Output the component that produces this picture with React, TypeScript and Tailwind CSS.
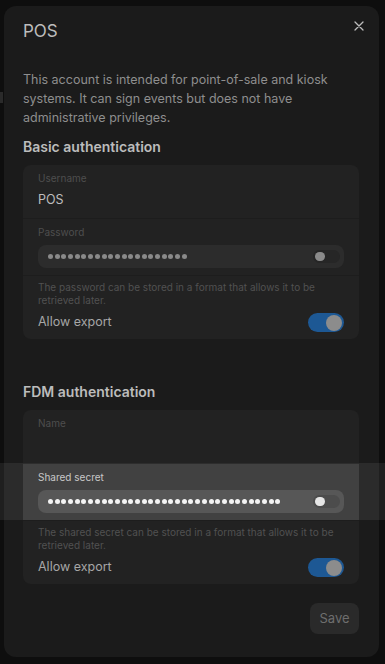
import React from "react";

const font = { fontFamily: "Inter, 'Noto Sans', sans-serif" };

const Dots = ({ count, color }: { count: number; color: string }) => (
  <div className="flex items-center gap-[1.7px]">
    {Array.from({ length: count }).map((_, i) => (
      <span key={i} className={`block w-[5px] h-[5px] rounded-full ${color}`}></span>
    ))}
  </div>
);

const EyeToggle = ({ active }: { active?: boolean }) => (
  <div
    className={`w-[27px] h-[13px] rounded-full flex items-center px-[2px] ${
      active ? "bg-[#3e3e3e]" : "bg-[#262626]"
    }`}
  >
    <span
      className={`block w-[10px] h-[9px] rounded-full ${
        active ? "bg-[#e4e4e4]" : "bg-[#8a8a8a]"
      }`}
    ></span>
  </div>
);

const Switch = () => (
  <div className="w-[36px] h-[19px] rounded-full bg-[#1d5894] flex items-center justify-end px-[2px]">
    <span className="block w-[16px] h-[16px] rounded-full bg-[#8c8c8c]"></span>
  </div>
);

const AuthCard = ({
  firstLabel,
  firstValue,
  secretLabel,
  dots,
  highlight,
  help,
}: {
  firstLabel: string;
  firstValue: string;
  secretLabel: string;
  dots: number;
  highlight?: boolean;
  help: string;
}) => (
  <div className="rounded-[8px] bg-[#222222] flex flex-col">
    <div className="h-[53px] px-[15px] pt-[6px] flex flex-col">
      <span className="text-[10px] leading-[14px] text-[#4e4e4e]">{firstLabel}</span>
      <span className="mt-[6px] text-[12.5px] leading-[18px] text-[#bdbdbd]">{firstValue}</span>
    </div>
    <div
      className={`h-[57px] px-[15px] pt-[6px] flex flex-col border-t border-[#1d1d1d] ${
        highlight ? "bg-[#333333]" : ""
      }`}
    >
      <span
        className={`text-[10px] leading-[14px] ${highlight ? "text-[#c4c4c4]" : "text-[#4e4e4e]"}`}
      >
        {secretLabel}
      </span>
      <div
        className={`mt-[6px] h-[23px] rounded-[8px] flex items-center justify-between pl-[10px] pr-[4px] ${
          highlight ? "bg-[#4a4a4a]" : "bg-[#2c2c2c]"
        }`}
      >
        <Dots count={dots} color={highlight ? "bg-[#f2f2f2]" : "bg-[#8a8a8a]"} />
        <EyeToggle active={highlight} />
      </div>
    </div>
    <div className="px-[15px] pt-[5px] pb-[7px] flex flex-col border-t border-[#1d1d1d]">
      <p className="text-[10px] leading-[13px] text-[#515151] pr-[10px]">{help}</p>
      <div className="mt-[6px] h-[19px] flex items-center justify-between">
        <span className="text-[12.5px] text-[#a6a6a6]">Allow export</span>
        <Switch />
      </div>
    </div>
  </div>
);

export default function App() {
  return (
    <div
      className="relative w-[385px] h-[664px] bg-[#0e0e0e] pt-[6px] px-[4px] overflow-hidden"
      style={font}
    >
      <div className="absolute left-0 top-[92px] w-[3px] h-[11px] bg-[#2a2a2a]"></div>
      <div className="w-[375px] h-[651px] rounded-[12px] bg-[#1b1b1b] pl-[19px] pr-[20px] flex flex-col">
        <div className="mt-[14px] h-[24px] flex items-center justify-between">
          <h1 className="text-[17px] text-[#bdbdbd]">POS</h1>
          <svg width="10" height="10" viewBox="0 0 10 10" className="mr-[-5px] mt-[-13px]">
            <path d="M1 1L9 9M9 1L1 9" stroke="#bdbdbd" strokeWidth="1.3" strokeLinecap="round" />
          </svg>
        </div>
        <p className="mt-[26px] text-[12.5px] leading-[19px] text-[#8e8e8e]">
          This account is intended for point-of-sale and kiosk systems. It can sign events but
          does not have administrative privileges.
        </p>
        <h2 className="mt-[10px] text-[14px] leading-[20px] font-semibold text-[#bcbcbc]">
          Basic authentication
        </h2>
        <div className="mt-[8px]">
          <AuthCard
            firstLabel="Username"
            firstValue="POS"
            secretLabel="Password"
            dots={21}
            help="The password can be stored in a format that allows it to be retrieved later."
          />
        </div>
        <h2 className="mt-[43px] text-[14px] leading-[20px] font-semibold text-[#bcbcbc]">
          FDM authentication
        </h2>
        <div className="mt-[8px]">
          <AuthCard
            firstLabel="Name"
            firstValue=""
            secretLabel="Shared secret"
            dots={35}
            highlight
            help="The shared secret can be stored in a format that allows it to be retrieved later."
          />
        </div>
        <div className="mt-[19px] flex justify-end">
          <button className="w-[49px] h-[31px] rounded-[8px] bg-[#2a2a2a] text-[13px] text-[#6e6e6e]">
            Save
          </button>
        </div>
      </div>
      <div className="pointer-events-none absolute left-0 right-0 top-[463px] h-[57px] bg-white/[0.07]"></div>
    </div>
  );
}
